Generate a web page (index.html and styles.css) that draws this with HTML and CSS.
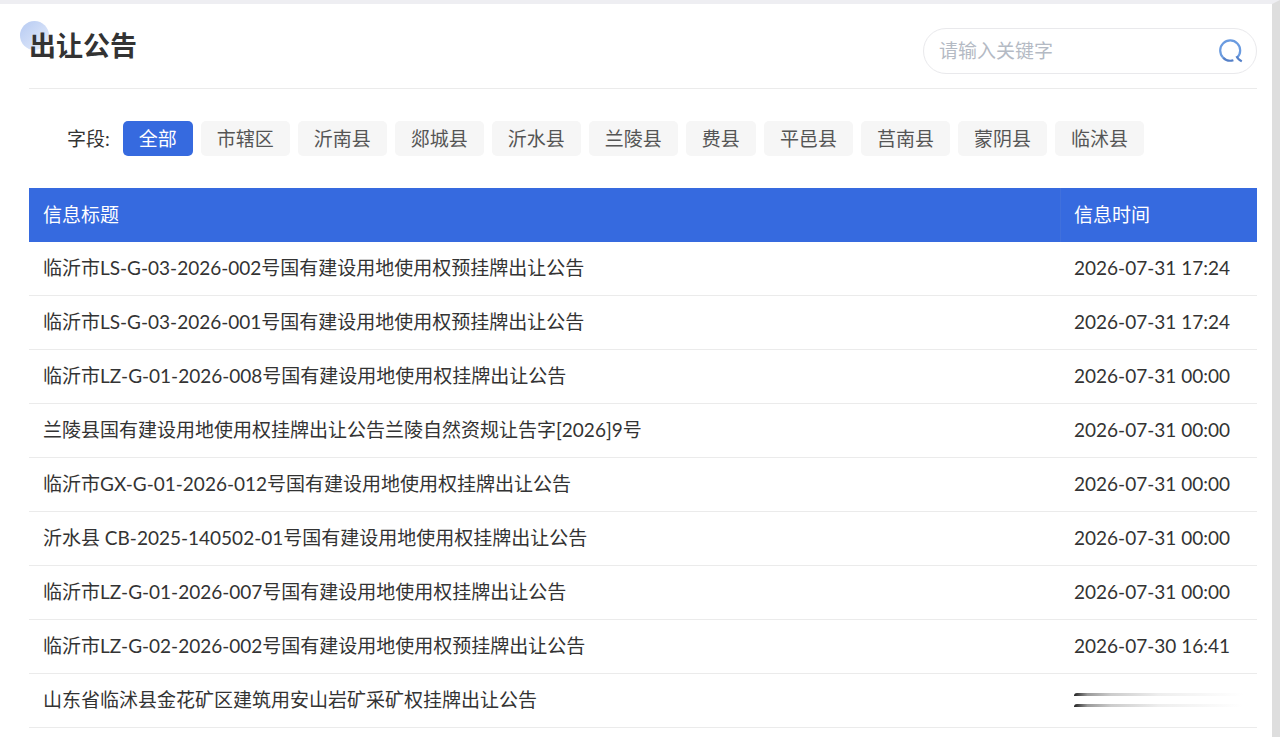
FILE: index.html
```html
<!DOCTYPE html>
<html lang="zh-CN">
<head>
<meta charset="utf-8">
<meta name="viewport" content="width=device-width, initial-scale=1">
<title>出让公告</title>
<link rel="stylesheet" href="styles.css">
</head>
<body>
<main class="panel">
  <header class="head">
    <h1 class="title">出让公告</h1>
    <form class="search" role="search">
      <input class="search-input" type="text" placeholder="请输入关键字" aria-label="请输入关键字">
      <button class="search-btn" type="button" aria-label="搜索">
        <svg width="24" height="24" viewBox="0 0 24 24" fill="none" stroke-width="2.2">
          <path d="M18.2 18.6A10 10 0 1 0 4 18.4" stroke="#6a9be0"/>
          <path d="M4 18.4A10 10 0 0 0 14.4 21.2" stroke="#5580c8"/>
          <path d="M17.6 17.2Q18.4 20 22.8 22.4" stroke="#5580c8"/>
        </svg>
      </button>
    </form>
  </header>
  <div class="filter">
    <span class="filter-label">字段:</span>
    <div class="tags">
      <button type="button" class="tag active">全部</button>
      <button type="button" class="tag">市辖区</button>
      <button type="button" class="tag">沂南县</button>
      <button type="button" class="tag">郯城县</button>
      <button type="button" class="tag">沂水县</button>
      <button type="button" class="tag">兰陵县</button>
      <button type="button" class="tag">费县</button>
      <button type="button" class="tag">平邑县</button>
      <button type="button" class="tag">莒南县</button>
      <button type="button" class="tag">蒙阴县</button>
      <button type="button" class="tag">临沭县</button>
    </div>
  </div>
  <table class="list">
    <thead>
      <tr><th scope="col">信息标题</th><th scope="col" class="time">信息时间</th></tr>
    </thead>
    <tbody>
      <tr><td><a href="#">临沂市LS-G-03-2026-002号国有建设用地使用权预挂牌出让公告</a></td><td>2026-07-31 17:24</td></tr>
      <tr><td><a href="#">临沂市LS-G-03-2026-001号国有建设用地使用权预挂牌出让公告</a></td><td>2026-07-31 17:24</td></tr>
      <tr><td><a href="#">临沂市LZ-G-01-2026-008号国有建设用地使用权挂牌出让公告</a></td><td>2026-07-31 00:00</td></tr>
      <tr><td><a href="#">兰陵县国有建设用地使用权挂牌出让公告兰陵自然资规让告字[2026]9号</a></td><td>2026-07-31 00:00</td></tr>
      <tr><td><a href="#">临沂市GX-G-01-2026-012号国有建设用地使用权挂牌出让公告</a></td><td>2026-07-31 00:00</td></tr>
      <tr><td><a href="#">沂水县 CB-2025-140502-01号国有建设用地使用权挂牌出让公告</a></td><td>2026-07-31 00:00</td></tr>
      <tr><td><a href="#">临沂市LZ-G-01-2026-007号国有建设用地使用权挂牌出让公告</a></td><td>2026-07-31 00:00</td></tr>
      <tr><td><a href="#">临沂市LZ-G-02-2026-002号国有建设用地使用权预挂牌出让公告</a></td><td>2026-07-30 16:41</td></tr>
      <tr><td><a href="#">山东省临沭县金花矿区建筑用安山岩矿采矿权挂牌出让公告</a></td><td><div class="streaks"><span class="streak"></span><span class="streak"></span></div></td></tr>
    </tbody>
  </table>
</main>
</body>
</html>
```

FILE: styles.css
```css
* { box-sizing: border-box; }

body {
  margin: 0;
  min-height: 100vh;
  background: #fff;
  border-top: 4px solid #eeeef2;
  border-right: 8px solid #dedede;
  color: #333;
  font: 19px/28px Lato, "Noto Sans CJK SC", sans-serif;
}

button, input { font: inherit; }

.panel { padding: 0 15px 0 29px; }

.head {
  display: flex;
  justify-content: space-between;
  height: 85px;
  padding-top: 24px;
  border-bottom: 1px solid #ebebeb;
}

.title {
  position: relative;
  z-index: 0;
  margin: 0;
  font-size: 27px;
  line-height: 36px;
  font-weight: 700;
}

.title::before {
  content: "";
  position: absolute;
  z-index: -1;
  left: -9px;
  top: -7px;
  width: 29px;
  height: 29px;
  border-radius: 50%;
  background: linear-gradient(135deg, #b6caf2, #e6edfb);
}

.search {
  display: flex;
  align-items: center;
  width: 334px;
  height: 46px;
  padding: 0 13px 0 15px;
  border: 1px solid #e9e9ec;
  border-radius: 23px;
}

.search-input {
  flex: 1;
  min-width: 0;
  padding: 0;
  border: 0;
  outline: 0;
  background: none;
  color: #333;
}

.search-input::placeholder { color: #b4bac4; opacity: 1; }

.search-btn {
  display: flex;
  padding: 0;
  border: 0;
  background: none;
  cursor: pointer;
}

.filter {
  display: flex;
  align-items: center;
  gap: 13px;
  padding: 32px 0 32px 38px;
}

.tags { display: flex; flex-wrap: wrap; gap: 8px; }

.tag {
  height: 35px;
  padding: 0 16px;
  border: 0;
  border-radius: 5px;
  background: #f6f6f6;
  color: #555;
  line-height: 34px;
  cursor: pointer;
}

.tag.active { background: #366adf; color: #fff; }

.list { width: 100%; border-collapse: separate; border-spacing: 0; }

.list th, .list td {
  height: 54px;
  padding: 0 14px;
  text-align: left;
  font-weight: 400;
}

.list th { background: #366adf; color: #fff; }

.list .time { width: 197px; box-shadow: inset 1px 0 #4070dc; }

.list td { padding-bottom: 1px; border-bottom: 1px solid #ebebeb; white-space: nowrap; }

.list a { color: inherit; text-decoration: none; }

.streaks { display: grid; gap: 8px; }

.streak {
  height: 3px;
  border-radius: 3px 0 0 0;
  background: linear-gradient(90deg, #222, #999 8%, #ccc 22%, #eee 50%, #fff);
}
```
